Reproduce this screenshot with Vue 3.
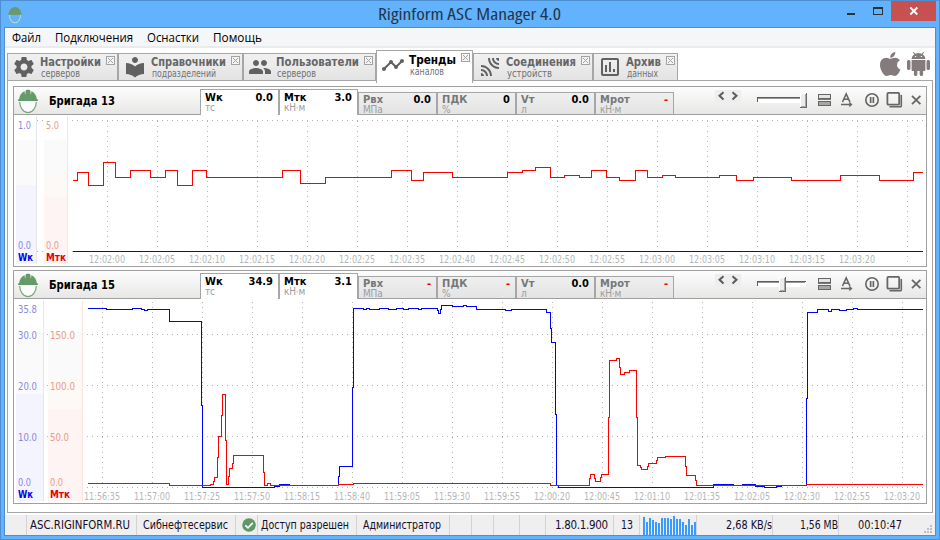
<script setup>
const menu = [
  { label: 'Файл', w: 29 },
  { label: 'Подключения', w: 78 },
  { label: 'Оснастки', w: 52 },
  { label: 'Помощь', w: 49 }
]

const tabs = [
  { title: 'Настройки', sub: 'серверов', width: 111, tw: 61, sw: 39, icon: 'M19.43 12.98c.04-.32.07-.64.07-.98s-.03-.66-.07-.98l2.11-1.65c.19-.15.24-.42.12-.64l-2-3.46c-.12-.22-.39-.3-.61-.22l-2.49 1c-.52-.4-1.08-.73-1.69-.98l-.38-2.65C14.46 2.18 14.25 2 14 2h-4c-.25 0-.46.18-.49.42l-.38 2.65c-.61.25-1.17.59-1.69.98l-2.49-1c-.23-.09-.49 0-.61.22l-2 3.46c-.13.22-.07.49.12.64l2.11 1.65c-.04.32-.07.65-.07.98s.03.66.07.98l-2.11 1.65c-.19.15-.24.42-.12.64l2 3.46c.12.22.39.3.61.22l2.49-1c.52.4 1.08.73 1.69.98l.38 2.65c.03.24.24.42.49.42h4c.25 0 .46-.18.49-.42l.38-2.65c.61-.25 1.17-.59 1.69-.98l2.49 1c.23.09.49 0 .61-.22l2-3.46c.12-.22.07-.49-.12-.64l-2.11-1.65zM12 15.5c-1.93 0-3.5-1.57-3.5-3.5s1.57-3.5 3.5-3.5 3.5 1.57 3.5 3.5-1.57 3.5-3.5 3.5z' },
  { title: 'Справочники', sub: 'подразделений', width: 125, tw: 75, sw: 64, icon: 'M12 11.55C9.64 9.35 6.48 8 3 8v11c3.48 0 6.64 1.35 9 3.55 2.36-2.19 5.52-3.55 9-3.55V8c-3.48 0-6.64 1.35-9 3.55zM12 8c1.66 0 3-1.34 3-3s-1.34-3-3-3-3 1.34-3 3 1.34 3 3 3z' },
  { title: 'Пользователи', sub: 'серверов', width: 133, tw: 83, sw: 39, icon: 'M16 11c1.66 0 2.99-1.34 2.99-3S17.66 5 16 5c-1.66 0-3 1.34-3 3s1.34 3 3 3zm-8 0c1.66 0 2.99-1.34 2.99-3S9.66 5 8 5C6.34 5 5 6.34 5 8s1.34 3 3 3zm0 2c-2.33 0-7 1.17-7 3.5V19h14v-2.5c0-2.33-4.67-3.5-7-3.5zm8 0c-.29 0-.62.02-.97.05 1.16.84 1.97 1.97 1.97 3.45V19h6v-2.5c0-2.33-4.67-3.5-7-3.5z' },
  { title: 'Тренды', sub: 'каналов', width: 97, tw: 47, sw: 34, active: true, icon: 'M23 8c0 1.1-.9 2-2 2-.18 0-.35-.02-.51-.07l-3.56 3.55c.05.16.07.34.07.52 0 1.1-.9 2-2 2s-2-.9-2-2c0-.18.02-.36.07-.52l-2.55-2.55c-.16.05-.34.07-.52.07s-.36-.02-.52-.07l-4.55 4.56c.05.16.07.33.07.51 0 1.1-.9 2-2 2s-2-.9-2-2 .9-2 2-2c.18 0 .35.02.51.07l4.56-4.55C8.02 9.36 8 9.18 8 9c0-1.1.9-2 2-2s2 .9 2 2c0 .18-.02.36-.07.52l2.55 2.55c.16-.05.34-.07.52-.07s.36.02.52.07l3.55-3.56C19.02 8.35 19 8.18 19 8c0-1.1.9-2 2-2s2 .9 2 2z' },
  { title: 'Соединения', sub: 'устройств', width: 120, tw: 70, sw: 45, icon: 'M18 3h3v3c-1.66 0-3-1.34-3-3zM10 3h2c0 4.97 4.03 9 9 9v2c-6.08 0-11-4.93-11-11zM14 3h2c0 2.76 2.24 5 5 5v2c-3.87 0-7-3.13-7-7zM14 21h-2c0-4.97-4.03-9-9-9v-2c6.07 0 11 4.93 11 11zM6 21H3v-3c1.66 0 3 1.34 3 3zM10 21H8c0-2.76-2.24-5-5-5v-2c3.87 0 7 3.13 7 7z' },
  { title: 'Архив', sub: 'данных', width: 85, tw: 35, sw: 31, icon: 'M5 3h14c1.1 0 2 .9 2 2v14c0 1.1-.9 2-2 2H5c-1.1 0-2-.9-2-2V5c0-1.1.9-2 2-2zM5 5v14h14V5zM7 10h2v7H7zM11 7h2v10h-2zM15 14h2v3h-2z' }
]

const trace = (runs) => {
  let d = ''
  runs.forEach(([x, y, end], i) => {
    d += `${i ? 'L' : 'M'}${x + 0.5} ${y + 0.5}`
    if (end !== undefined) d += `H${end + 0.5}`
  })
  return d
}
// Consecutive steps given as [start x, level]; the last entry closes the trace.
const steps = (list) => trace(list.map(([x, y], i) => [x, y, i < list.length - 1 ? list[i + 1][0] : undefined]))

const range = (from, to, step) => {
  const out = []
  for (let v = from; v <= to; v += step) out.push(v)
  return out
}

const panels = [
  {
    name: 'Бригада 13', top: 115, height: 151, knob: 44,
    channels: [
      { n: 'Wк', u: 'тс', v: '0.0', on: true }, { n: 'Мтк', u: 'кН·м', v: '3.0', on: true },
      { n: 'Рвх', u: 'МПа', v: '0.0' }, { n: 'ПДК', u: '%', v: '0' },
      { n: 'Vт', u: 'л', v: '0.0' }, { n: 'Мрот', u: 'кН·м', v: '-' }
    ],
    strips: [
      { x: 16, w: 20, bands: [['#fafafa', 140, 185], ['#f4f4ff', 185, 264]], edge: '#e6e6ea' },
      { x: 44, w: 23, bands: [['#fafafa', 140, 173], ['#fcf9f7', 173, 197], ['#fff4f4', 197, 264]], edge: '#fde3de' }
    ],
    stripTop: 116, stripEnd: 264,
    w: { x: 18, labels: [['1.0', 128.5], ['0.0', 248.5]] },
    m: { x: 46, labels: [['5.0', 128.5], ['0.0', 248.5]] },
    nameY: 260.5, labelY: 262.5,
    rows: [120], rowStart: 72, gaps: [[37, 120], [42, 120], [37, 251], [42, 251], [72, 251]],
    cols: range(107, 857, 50), colStart: 121, colEnd: 247, tail: [907, 121, 263],
    times: ['12:02:00', '12:02:05', '12:02:10', '12:02:15', '12:02:20', '12:02:25', '12:02:35', '12:02:40', '12:02:45', '12:02:50', '12:02:55', '12:03:00', '12:03:05', '12:03:10', '12:03:15', '12:03:20'],
    blue: 'M73 251.5H923',
    red: steps([[72.5, 180], [76, 180], [77, 172], [88, 185], [102.5, 162], [115, 177], [130, 170], [150, 177], [165, 170], [177, 185], [192, 170], [206, 177], [282, 170], [300, 183], [325, 177], [391, 170], [411, 180], [423, 172], [452, 177], [507, 172], [522, 170], [535, 167], [550, 177], [564, 175], [579, 177], [591, 170], [606, 177], [619, 180], [635, 170], [647, 177], [662, 175], [675, 177], [719, 175], [736, 180], [753, 177], [791, 180], [840, 175], [879, 180], [913, 172], [922.5, 172]])
  },
  {
    name: 'Бригада 15', top: 299, height: 204, knob: 23,
    channels: [
      { n: 'Wк', u: 'тс', v: '34.9', on: true }, { n: 'Мтк', u: 'кН·м', v: '3.1', on: true },
      { n: 'Рвх', u: 'МПа', v: '-' }, { n: 'ПДК', u: '%', v: '-' },
      { n: 'Vт', u: 'л', v: '0.0' }, { n: 'Мрот', u: 'кН·м', v: '-' }
    ],
    strips: [
      { x: 16, w: 27, bands: [['#fafafa', 332, 394], ['#f4f4ff', 394, 501]], edge: '#e6e6ea' },
      { x: 48, w: 34, bands: [['#fafafa', 332, 377], ['#fcf9f7', 377, 409], ['#fff4f4', 409, 501]], edge: '#fde3de' }
    ],
    stripTop: 301, stripEnd: 501,
    w: { x: 18, labels: [['35.8', 312.5], ['30.0', 338.5], ['20.0', 389.5], ['10.0', 440.5], ['0.0', 485.5]] },
    m: { x: 50, labels: [['150.0', 338.5], ['100.0', 389.5], ['50.0', 440.5], ['0.0', 485.5]] },
    nameY: 497.5, labelY: 499.5,
    rows: [334, 385, 436, 487], rowStart: 87, gaps: [[47, 334], [47, 385], [47, 436]],
    cols: range(102, 902, 50), colStart: 302, colEnd: 484, tail: null,
    times: ['11:56:35', '11:57:00', '11:57:25', '11:57:50', '11:58:15', '11:58:40', '11:59:05', '11:59:30', '11:59:55', '12:00:20', '12:00:45', '12:01:10', '12:01:35', '12:02:05', '12:02:30', '12:02:55', '12:03:20'],
    blue: steps([[87.5, 308], [106, 309], [132, 308], [141, 309], [144, 310], [147, 309], [169, 321], [201, 405], [202, 487], [274, 486], [279, 484], [289, 485], [338, 476], [339, 466], [352, 387], [353, 308], [363, 309], [366, 308], [369, 309], [379, 308], [388, 309], [396, 308], [403, 309], [408, 308], [418, 309], [421, 308], [437, 310], [438, 313], [440, 309], [441, 305], [452, 306], [463, 305], [466, 306], [476, 309], [505, 310], [511, 309], [546, 312], [550, 328], [551, 342], [555, 414], [556, 485], [558, 487], [713, 484], [733, 485], [742, 484], [755, 486], [764, 487], [776, 486], [781, 485], [806, 398], [807, 312], [817, 309], [828, 311], [831, 309], [839, 310], [846, 309], [853, 308], [857, 309], [922.5, 309]]),
    red: steps([[87.5, 483], [169, 485], [210, 484], [213, 481], [214, 477], [217, 457], [218, 436], [221, 415], [222, 394], [225, 440], [226, 484], [228, 476], [229, 468], [232, 463], [233, 455], [263, 472], [264, 485], [267, 483], [270, 485], [338, 484], [353, 483], [550, 485], [589, 478], [590, 474], [594, 478], [595, 481], [600, 477], [601, 474], [608, 417], [609, 360], [616, 358], [619, 367], [620, 374], [624, 372], [629, 370], [636, 417], [637, 465], [640, 467], [641, 469], [647, 466], [648, 463], [656, 460], [657, 457], [665, 456], [685, 466], [686, 475], [695, 480], [696, 485], [806, 484], [922.5, 484]])
  }
]

const traffic = [18, 13, 17, 15, 13, 12, 17, 17, 17, 16, 19, 16, 16, 13, 10, 16, 10, 13]
</script>

<template>
  <div class="window">
    <header class="titlebar">
      <svg class="app-icon" width="14" height="18" viewBox="0 0 20 25">
        <path d="M1 11C1 6 5 1 10 1s9 5 9 10z" fill="#6a9a6c" />
        <path d="M0 10.5h20v1.8H0z" fill="#6a9a6c" />
        <path d="M2 12c0 6 3 11.5 8 11.5S18 18 18 12" fill="none" stroke="#b9d6d8" stroke-width="1.6" />
      </svg>
      <h1 class="title"><svg width="184" height="22"><text x="0" y="17" textLength="183" lengthAdjust="spacingAndGlyphs">Riginform ASC Manager 4.0</text></svg></h1>
      <div class="controls">
        <svg width="51" height="20" viewBox="0 0 51 20" shape-rendering="crispEdges">
          <path d="M7 12h8v2H7z" fill="#2b3138" />
          <path d="M33 6h10v8H33zM34 8v5h8V8z" fill="#2b3138" fill-rule="evenodd" />
        </svg>
        <button class="close" aria-label="Закрыть">
          <svg width="10" height="8" viewBox="0 0 10 8"><path d="M1.3.5l7 7M8.3.5l-7 7" stroke="#fff" stroke-width="1.9" /></svg>
        </button>
      </div>
    </header>

    <div class="client">
      <nav class="menu">
        <svg v-for="m in menu" :key="m.label" :width="m.w" height="18"><text x="0" y="14" :textLength="m.w" lengthAdjust="spacingAndGlyphs">{{ m.label }}</text></svg>
      </nav>

      <div class="tabs">
        <div v-for="t in tabs" :key="t.title" class="tab" :class="{ active: t.active }" :style="{ width: t.width + 'px' }">
          <svg class="tab-icon" width="24" height="24" viewBox="0 0 24 24"><path :d="t.icon" fill-rule="evenodd" /></svg>
          <svg class="tab-text" :width="t.tw + 4" height="26">
            <text class="tt" x="0" y="12" :textLength="t.tw" lengthAdjust="spacingAndGlyphs">{{ t.title }}</text>
            <text class="ts" x="1" y="23" :textLength="t.sw" lengthAdjust="spacingAndGlyphs">{{ t.sub }}</text>
          </svg>
          <svg class="tab-x" width="9" height="9" viewBox="0 0 9 9">
            <rect x=".5" y=".5" width="8" height="8" />
            <path d="M2 2l5 5M7 2l-5 5" />
          </svg>
        </div>
        <div class="platforms">
          <svg width="20" height="24" viewBox="4 32 368 448" preserveAspectRatio="none"><path d="M318.7 268.7c-.2-36.7 16.4-64.4 50-84.8-18.8-26.9-47.2-41.7-84.7-44.6-35.5-2.8-74.3 20.7-88.5 20.7-15 0-49.4-19.7-76.4-19.7C63.3 141.2 4 184.8 4 273.5q0 39.3 14.4 81.2c12.8 36.7 59 126.7 107.2 125.2 25.2-.6 43-17.9 75.8-17.9 31.8 0 48.3 17.9 76.4 17.9 48.6-.7 90.4-82.5 102.6-119.3-65.2-30.7-61.7-90-61.7-91.9zm-56.6-164.2c27.3-32.4 24.8-61.9 24-72.5-24.1 1.4-52 16.4-67.9 34.9-17.5 19.8-27.8 44.3-25.6 71.9 26.1 2 49.9-11.4 69.5-34.3z" /></svg>
          <svg width="23" height="24" viewBox="2 0 20 24" preserveAspectRatio="none"><path d="M6 18c0 .55.45 1 1 1h1v3.5c0 .83.67 1.5 1.5 1.5s1.5-.67 1.5-1.5V19h2v3.5c0 .83.67 1.5 1.5 1.5s1.5-.67 1.5-1.5V19h1c.55 0 1-.45 1-1V8H6v10zM3.5 8C2.67 8 2 8.67 2 9.5v7c0 .83.67 1.5 1.5 1.5S5 17.33 5 16.5v-7C5 8.67 4.33 8 3.5 8zm17 0c-.83 0-1.5.67-1.5 1.5v7c0 .83.67 1.5 1.5 1.5s1.5-.67 1.5-1.5v-7c0-.83-.67-1.5-1.5-1.5zm-4.97-5.84l1.3-1.3c.2-.2.2-.51 0-.71-.2-.2-.51-.2-.71 0l-1.48 1.48C13.85 1.23 12.95 1 12 1c-.96 0-1.86.23-2.66.63L7.85.15c-.2-.2-.51-.2-.71 0-.2.2-.2.51 0 .71l1.31 1.31C6.97 3.26 6 5.01 6 7h12c0-1.99-.97-3.75-2.47-4.84zM10 5H9V4h1v1zm5 0h-1V4h1v1z" /></svg>
        </div>
      </div>

      <main class="page">
        <section v-for="p in panels" :key="p.name" class="panel">
          <div class="head">
            <svg class="helmet" width="20" height="25" viewBox="0 0 20 25">
              <path d="M1.2 10C1.5 6.500 3.500 3.500 6.500 2l.6 4L7.800 1.200C9 .6 11 .6 12.200 1.200L12.900 6l.6-4C16.500 3.500 18.500 6.500 18.800 10c1 .3 1.200.9 1.200 2H0c0-1.100.2-1.700 1.200-2z" fill="#659b68" />
              <path d="M1.700 13c.2 5.500 3.500 10.600 8.300 10.600S18.100 18.500 18.300 13" fill="#fbfbfb" stroke="#7aa67c" stroke-width="1.200" />
            </svg>
            <svg class="crew" width="151" height="27"><text x="0" y="18" textLength="66" lengthAdjust="spacingAndGlyphs">{{ p.name }}</text></svg>
            <div v-for="c in p.channels" :key="c.n" class="chan" :class="{ on: c.on }">
              <div class="line"><b class="cn">{{ c.n }}</b><b class="cv" :class="{ none: c.v === '-' }">{{ c.v }}</b></div>
              <div class="unit">{{ c.u }}</div>
            </div>
            <div class="tools">
              <svg class="arrows" width="26" height="13" viewBox="0 0 26 13"><path d="M8.500 2.200L4.500 5.800l4 3.600M17.500 2.200l4 3.600-4 3.600" fill="none" stroke="#5a5a5a" stroke-width="2" /></svg>
              <svg class="slider" width="54" height="27" viewBox="0 0 54 27" shape-rendering="crispEdges">
                <path d="M1 10h49v6H1z" fill="#fff" />
                <path d="M1 10h49v1H2v4H1z" fill="#5c5c5c" />
                <path d="M2 11h47v1H2z" fill="#999" />
                <g :transform="`translate(${p.knob - 0.5} 6)`">
                  <path d="M0 0h7v15H0z" fill="#6b6b6b" />
                  <path d="M0 0h6v14H0z" fill="#fff" />
                  <path d="M1 1h5v13H1z" fill="#ececec" />
                  <path d="M5 1h1v13H1v-1h4z" fill="#a8a8a8" />
                </g>
              </svg>
              <svg class="i-rows" width="13" height="27" viewBox="0 0 13 27" shape-rendering="crispEdges"><path d="M0 7h13v5H0zM1 8v3h11V8zM0 14h13v5H0z" fill="#666" fill-rule="evenodd" /><path d="M1 15h11v3H1z" fill="#a6a6a6" /><path d="M1 8h11v3H1z" fill="#e5e5e5" /><path d="M0 12h13v1H0z" fill="#777" /></svg>
              <svg class="i-a" width="13" height="27" viewBox="0 0 13 27"><path d="M1.500 15L5.200 7 8.900 15M2.800 12.300h4.800" fill="none" stroke="#666" stroke-width="1.600" /><path d="M0 17.500h10.500M8.300 15.500l2.200 2-2.200 2" fill="none" stroke="#666" stroke-width="1.300" /></svg>
              <svg class="i-pause" width="15" height="27" viewBox="0 0 15 27"><circle cx="7" cy="13" r="6.200" fill="none" stroke="#666" stroke-width="1.600" /><path d="M4.800 10h1.700v6H4.800zM7.500 10h1.700v6H7.500z" fill="#666" /></svg>
              <svg class="i-copy" width="17" height="27" viewBox="0 0 17 27"><rect x="0.400" y="5.900" width="11.800" height="11.800" rx="1" fill="none" stroke="#666" stroke-width="1.800" /><path d="M14.300 8v11q0 .8-.8.800H2.500" fill="none" stroke="#666" stroke-width="1.600" /></svg>
              <svg class="i-x" width="10" height="27" viewBox="0 0 10 27"><path d="M0 8.800l8.400 8.400M8.400 8.800L0 17.200" stroke="#666" stroke-width="1.800" /></svg>
            </div>
          </div>

          <svg class="chart" width="912" :height="p.height" :viewBox="`14 ${p.top} 912 ${p.height}`">
            <g shape-rendering="crispEdges">
              <g v-for="s in p.strips" :key="s.x">
                <rect v-for="b in s.bands" :key="b[1]" :x="s.x" :y="b[1]" :width="s.w" :height="b[2] - b[1]" :fill="b[0]" />
                <rect :x="s.x + s.w" :y="p.stripTop" width="1" :height="p.stripEnd - p.stripTop" :fill="s.edge" />
              </g>
              <g class="grid">
                <path v-for="y in p.rows" :key="'r' + y" :d="`M${p.rowStart} ${y + 0.5}H923`" />
                <path v-for="x in p.cols" :key="'c' + x" :d="`M${x + 0.5} ${p.colStart}V${p.colEnd}`" />
                <path v-if="p.tail" :d="`M${p.tail[0] + 0.5} ${p.tail[1]}V${p.tail[2]}`" />
                <path v-for="g in p.gaps" :key="g.join()" :d="`M${g[0]} ${g[1] + 0.5}h1`" />
              </g>
              <path :d="p.blue" fill="none" stroke="#0000ff" />
              <path :d="p.red" fill="none" stroke="#ff0000" />
            </g>
            <g class="axis w">
              <text v-for="l in p.w.labels" :key="l[1]" :x="p.w.x" :y="l[1]" :textLength="l[0].length * 6 - 5" lengthAdjust="spacingAndGlyphs">{{ l[0] }}</text>
              <text class="axis-name" :x="p.w.x" :y="p.nameY" textLength="15" lengthAdjust="spacingAndGlyphs">Wк</text>
            </g>
            <g class="axis m">
              <text v-for="l in p.m.labels" :key="l[1]" :x="p.m.x" :y="l[1]" :textLength="l[0].length * 6 - 5" lengthAdjust="spacingAndGlyphs">{{ l[0] }}</text>
              <text class="axis-name" :x="p.m.x" :y="p.nameY" textLength="20" lengthAdjust="spacingAndGlyphs">Мтк</text>
            </g>
            <g class="times">
              <text v-for="(t, i) in p.times" :key="t" :x="p.cols[i] - 18" :y="p.labelY" textLength="36" lengthAdjust="spacingAndGlyphs">{{ t }}</text>
            </g>
          </svg>
        </section>
      </main>

      <footer class="status">
        <span class="cell c0"></span>
        <span class="cell c1"><svg width="101" height="18"><text x="0" y="13" textLength="100" lengthAdjust="spacingAndGlyphs">ASC.RIGINFORM.RU</text></svg></span>
        <span class="cell c2"><svg width="87" height="18"><text x="0" y="13" textLength="85" lengthAdjust="spacingAndGlyphs">Сибнефтесервис</text></svg></span>
        <span class="cell c3"><svg width="14" height="14" viewBox="0 0 14 14"><circle cx="7" cy="7" r="6.800" fill="#5f9766" /><path d="M3.300 7.300l2.700 2.600 4.800-5" fill="none" stroke="#fff" stroke-width="1.700" /></svg></span>
        <span class="cell c4"><svg width="91" height="18"><text x="0" y="13" textLength="88" lengthAdjust="spacingAndGlyphs">Доступ разрешен</text></svg></span>
        <span class="cell c5"><svg width="81" height="18"><text x="0" y="13" textLength="78" lengthAdjust="spacingAndGlyphs">Администратор</text></svg></span>
        <span class="cell c6"></span><span class="cell c6"></span><span class="cell c7"></span><span class="cell c7"></span>
        <span class="cell c8"><svg width="55" height="18"><text x="0" y="13" textLength="53">1.80.1.900</text></svg></span>
        <span class="cell c9"><svg width="13" height="18"><text x="0" y="13" textLength="12" lengthAdjust="spacingAndGlyphs">13</text></svg></span>
        <span class="cell c10"><i v-for="(h, i) in traffic" :key="i" class="bar" :style="{ height: h + 'px' }"></i></span>
        <span class="cell c11"><svg width="46" height="18"><text x="0" y="13" textLength="46" lengthAdjust="spacingAndGlyphs">2,68 KB/s</text></svg></span>
        <span class="cell c12"><svg width="38" height="18"><text x="0" y="13" textLength="38" lengthAdjust="spacingAndGlyphs">1,56 MB</text></svg></span>
        <span class="cell c13">
          <svg width="46" height="18"><text x="0" y="13" textLength="44" lengthAdjust="spacingAndGlyphs">00:10:47</text></svg>
          <svg class="grip" width="8" height="8" viewBox="0 0 8 8" shape-rendering="crispEdges"><path d="M6 0h2v2H6zM3 3h2v2H3zM6 3h2v2H6zM0 6h2v2H0zM3 6h2v2H3zM6 6h2v2H6z" fill="#bfbfbf" /></svg>
        </span>
      </footer>
    </div>
  </div>
</template>

<style>
body { margin: 0; overflow: hidden; }
</style>

<style scoped>
.window {
  box-sizing: border-box;
  width: 940px;
  height: 540px;
  border: 1px solid #4f8fcf;
  background: #63b2fd;
  padding: 0 3px 3px;
  font-family: "DejaVu Sans Condensed", "DejaVu Sans", sans-serif;
  font-stretch: condensed;
  font-size: 11px;
  display: flex;
  flex-direction: column;
}
svg { display: block; flex: none; overflow: visible; }
.chart, .helmet { overflow: hidden; }
.titlebar { height: 26px; display: flex; align-items: flex-start; }
.app-icon { margin: 5px 0 0 4px; }
.title { margin: 2px 0 0 356px; font-size: 16px; font-weight: 400; }
.title text { font-family: "Open Sans", "Noto Sans", sans-serif; font-size: 15.5px; fill: #22364a; }
.controls { margin-left: auto; display: flex; }
.close { width: 45px; height: 20px; border: 0; padding: 0; background: #c75050; display: flex; align-items: center; justify-content: center; }
.client { flex: 1; border: 1px solid #4f8fcf; background: #fff; display: flex; flex-direction: column; min-height: 0; }
.menu {
  box-sizing: border-box;
  height: 20px;
  background: #f5f6f7;
  border-bottom: 2px solid #eaebec;
  display: flex;
  gap: 14px;
  padding-left: 7px;
  font: 12.5px "Open Sans", "Noto Sans", sans-serif;
  fill: #000;
}
.tabs { height: 32px; padding-left: 2px; display: flex; align-items: flex-end; }
.tab {
  box-sizing: border-box;
  height: 27px;
  border: 1px solid #a6a6a6;
  border-bottom: 0;
  background: linear-gradient(#f1f1f1, #e3e3e3);
  display: flex;
  align-items: flex-start;
  padding-left: 4px;
}
.tab.active { height: 33px; margin-bottom: -3px; position: relative; z-index: 1; background: #fff; }
.tab-icon { margin-top: 1px; fill: #616161; }
.active .tab-icon { margin-top: 2px; }
.tab-text { margin: 0 -8px 0 4px; }
.active .tab-text { margin-top: 1px; }
.tt { font-size: 11.5px; font-weight: 700; fill: #666; }
.active .tt { fill: #000; }
.ts { font-size: 10.5px; fill: #6c7376; }
.tab-x { margin: 2px 2px 0 auto; fill: #f4f4f4; stroke: #a3a3a3; stroke-width: 1; }
.platforms { margin-left: auto; display: flex; gap: 7px; padding: 0 5px 4px 0; fill: #847c7c; }
.page {
  box-sizing: border-box;
  width: 926px;
  height: 433px;
  margin-left: 2px;
  border: 1px solid #a6a6a6;
  padding: 5px;
  display: flex;
  flex-direction: column;
  gap: 3px;
}
.panel { box-sizing: border-box; width: 914px; border: 1px solid #a0a0a0; }
.head {
  box-sizing: border-box;
  height: 28px;
  border-bottom: 1px solid #a0a0a0;
  background: linear-gradient(#fdfdfd, #e8e7e6);
  display: flex;
}
.helmet { margin: 2px 0 0 4px; }
.crew { margin-left: 11px; font-weight: 700; font-size: 11.5px; }
.chan {
  box-sizing: border-box;
  width: 79px;
  height: 22px;
  margin-top: 5px;
  padding: 1px 5px 0 4px;
  border: 1px solid #a6a6a6;
  border-bottom: 0;
  background: linear-gradient(#efefef, #e4e4e4);
}
.chan.on { height: 26px; margin-top: 2px; padding-top: 2px; background: #fff; }
.line { display: flex; justify-content: space-between; line-height: 11px; height: 11px; }
.line b { display: block; height: 11px; }
.cn { color: #777; letter-spacing: 0.1px; }
.on .cn, .cv { color: #000; }
.cv.none { color: #f00000; }
.unit { font-size: 10px; line-height: 10px; color: #9c9c9c; letter-spacing: -0.2px; }
.tools { display: flex; margin-left: 41px; }
.arrows { margin-top: 3px; background: #eeeeee; }
.slider { margin-left: 15px; }
.i-rows { margin-left: 8px; }
.i-a { margin-left: 10px; }
.i-pause { margin-left: 11px; }
.i-copy { margin-left: 7px; }
.i-x { margin-left: 8px; }
.grid path { stroke: #b4b4b4; stroke-width: 1; stroke-dasharray: 1 4; fill: none; }
.axis { font-size: 10.5px; }
.axis.w { fill: #8a8ade; }
.axis.m { fill: #e99a8c; }
.axis-name { font-size: 10px; font-weight: 700; }
.w .axis-name { fill: #0000e6; }
.m .axis-name { fill: #e60000; }
.times { font-size: 10.5px; fill: #b2b8b8; }
.status { margin-top: 2px; height: 20px; display: flex; background: #f0efef; font-size: 11.5px; fill: #10102a; }
.cell { box-sizing: border-box; height: 20px; border-right: 1px solid #d6d2d2; display: flex; align-items: center; }
.c0 { width: 22px; }
.c1 { width: 110px; padding-left: 3px; }
.c2 { width: 99px; padding-left: 6px; }
.c3 { width: 22px; padding-left: 6px; }
.c4 { width: 99px; padding-left: 3px; }
.c5 { width: 93px; padding-left: 6px; }
.c6 { width: 22px; }
.c7 { width: 26px; }
.c8 { width: 68px; padding-left: 9px; }
.c9 { width: 26px; padding-left: 7px; }
.c10 { width: 57px; padding-left: 3px; align-items: flex-end; gap: 1px; }
.bar { width: 2px; background: #3a9bfa; flex: none; }
.c11 { width: 76px; justify-content: flex-end; }
.c12 { width: 66px; justify-content: flex-end; }
.c13 { flex: 1; border: 0; padding-left: 19px; }
.grip { margin: 8px 3px 0 auto; }
</style>
